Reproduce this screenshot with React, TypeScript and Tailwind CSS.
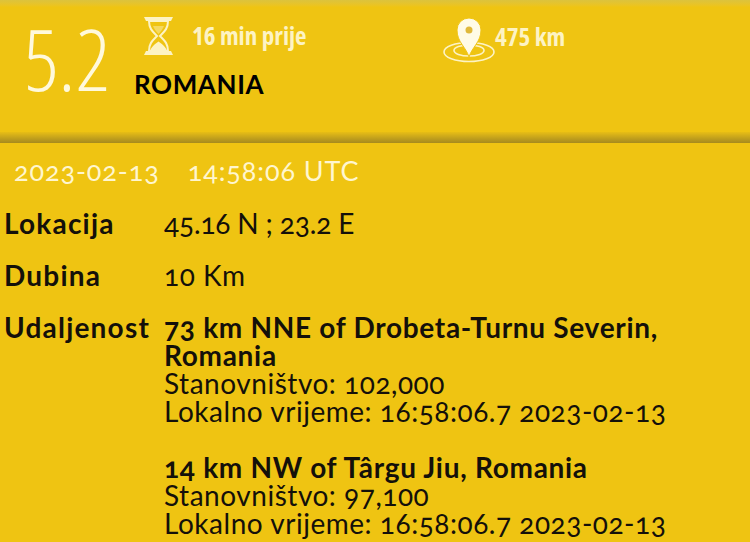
import React from 'react';

const HourglassIcon = () => (
    <svg width="29" height="38" viewBox="0 0 29 38" className="text-[#fdf3c4]">
        <path d="M0 0h29l-2 4H2zM2 34h25l2 4H0z" fill="currentColor" />
        <path d="M5 4h19c0 7-3 10-7 14l-1 1 1 1c4 4 7 7 7 14H5c0-7 3-10 7-14l1-1-1-1C8 14 5 11 5 4z" fill="none" stroke="currentColor" strokeWidth="2" />
        <path d="M9 9h11c-1 3-3 5-5.500 8-2.500-3-4.500-5-5.500-8z" fill="currentColor" opacity="0.45" />
        <path d="M6 34c1-4 5-7 8.500-9.500C18 27 22 30 23 34z" fill="currentColor" />
    </svg>
);

const PinIcon = () => (
    <svg width="52" height="46" viewBox="0 0 52 46" className="text-[#fdf3c4]">
        <ellipse cx="26" cy="35" rx="25" ry="9.500" fill="none" stroke="currentColor" strokeWidth="1.600" />
        <ellipse cx="26" cy="33.500" rx="15" ry="5.500" fill="none" stroke="currentColor" strokeWidth="1.600" />
        <path d="M26 40c-3-10-12-15-12-27a12 12 0 0 1 24 0c0 12-9 17-12 27z" fill="#fffbe6" stroke="#f0c514" strokeWidth="1" />
        <circle cx="26" cy="13" r="3.500" fill="#e0b93a" />
    </svg>
);

const Row = ({ label, children, className }: { label: string; children: React.ReactNode; className: string }) => (
    <div className={`flex ${className}`}>
        <div className="w-[164px] shrink-0 pl-[4px] font-bold tracking-[1.200px]">{label}</div>
        <div className="flex-1 pr-[60px]">{children}</div>
    </div>
);

const Place = ({ name, people, time }: { name: string; people: string; time: string }) => (
    <div className="mb-[28px]">
        <div className="font-bold tracking-[0.700px]">{name}</div>
        <div>Stanovništvo: {people}</div>
        <div>Lokalno vrijeme: {time}</div>
    </div>
);

export default function App() {
    return (
        <div className="h-[542px] w-[750px] overflow-hidden bg-[#efc412] font-['Lato',sans-serif] text-[28px] leading-[28px] tracking-[0.530px] text-[#14100a] oldstyle-nums">
            <div className="h-[7px] bg-gradient-to-b from-[#dcc33c] to-[#efc412]" />
            <div className="flex h-[125px]">
                <div className="ml-[24px] mt-[6px] w-[110px] font-['Open_Sans',sans-serif] text-[85px] font-light leading-[90px] tracking-normal text-[#fff9dc] font-stretch-condensed lining-nums">5.2</div>
                <div className="flex flex-col">
                    <div className="flex h-[48px] items-start">
                        <div className="ml-[10px] mt-[10px]"><HourglassIcon /></div>
                        <div className="ml-[19px] mt-[14px] w-[251px] font-['Open_Sans',sans-serif] text-[25px] font-bold leading-[28px] tracking-normal text-[#fdf3c4] font-stretch-condensed lining-nums">16 min prije</div>
                        <div className="mt-[10px]"><PinIcon /></div>
                        <div className="mt-[15px] font-['Open_Sans',sans-serif] text-[25px] font-bold leading-[28px] tracking-normal text-[#fdf3c4] font-stretch-condensed lining-nums">475 km</div>
                    </div>
                    <div className="mt-[15px] text-[26px] font-bold leading-[28px] tracking-[0.600px] text-black">ROMANIA</div>
                </div>
            </div>
            <div className="h-[11px] bg-gradient-to-b from-[#e8be14] to-[#a58a1e]" />
            <div className="flex h-[57px] items-center gap-[28px] pb-[1px] pl-[14px] text-[27px] tracking-[0.900px] text-[#fff6cf]">
                <span>2023-02-13</span>
                <span>14:58:06 UTC</span>
            </div>
            <div className="pt-[9px]">
                <Row label="Lokacija" className="mb-[24px]"><span className="tracking-[-0.150px]">45.16 N ; 23.2 E</span></Row>
                <Row label="Dubina" className="mb-[24px]">10 Km</Row>
                <Row label="Udaljenost" className="">
                    <Place name="73 km NNE of Drobeta-Turnu Severin, Romania" people="102,000" time="16:58:06.7 2023-02-13" />
                    <Place name="14 km NW of Târgu Jiu, Romania" people="97,100" time="16:58:06.7 2023-02-13" />
                </Row>
            </div>
        </div>
    );
}
